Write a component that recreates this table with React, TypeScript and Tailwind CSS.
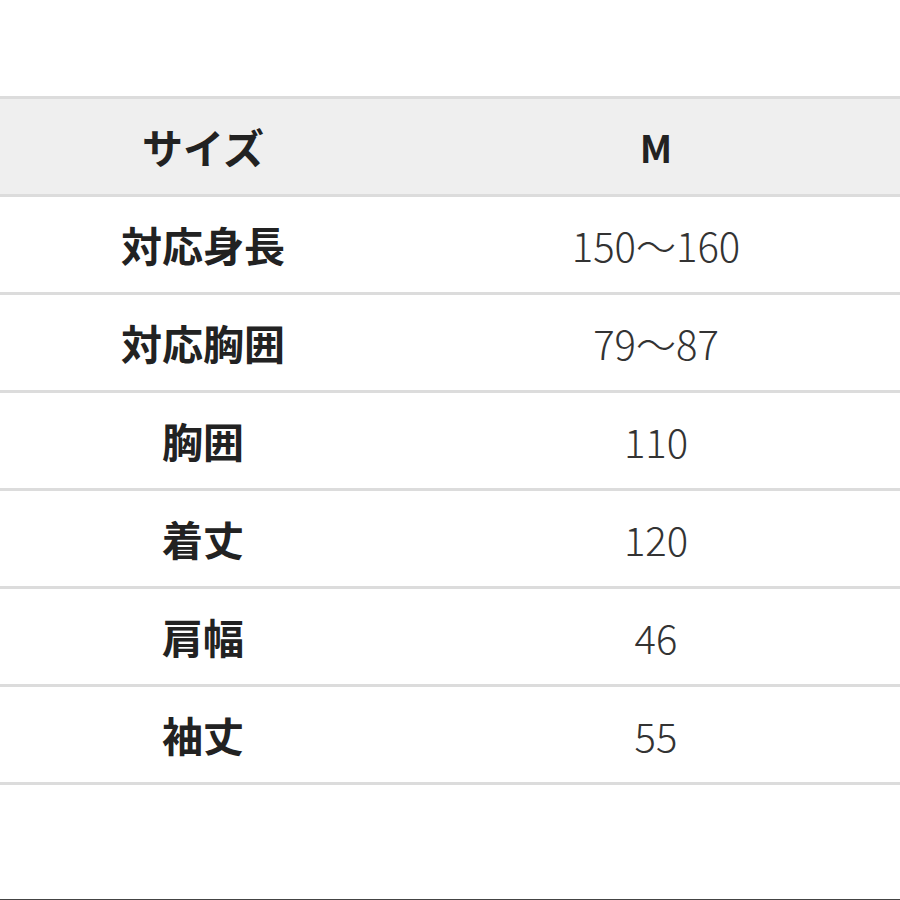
const rows: [string, string][] = [
  ["対応身長", "150〜160"],
  ["対応胸囲", "79〜87"],
  ["胸囲", "110"],
  ["着丈", "120"],
  ["肩幅", "46"],
  ["袖丈", "55"],
];

const font = "font-['Noto_Sans_CJK_JP','Noto_Sans',sans-serif]";

export default function App() {
  return (
    <div className={`h-[900px] w-[900px] overflow-hidden bg-white ${font}`}>
      <div className="h-[96px]" />
      <div className="w-[912px] border-t-[3px] border-[#dcdcdc]">
        <div className="grid h-[98px] grid-cols-[406px_500px] items-center border-b-[3px] border-[#dcdcdc] bg-[#efefef] text-[41px] font-bold text-[#222]">
          <div className="text-center">サイズ</div>
          <div className="text-center text-[38px]">M</div>
        </div>
        {rows.map(([label, value]) => (
          <div
            key={label}
            className="grid h-[98px] grid-cols-[406px_500px] items-center border-b-[3px] border-[#dcdcdc]"
          >
            <div className="text-center text-[41px] font-bold text-[#222]">{label}</div>
            <div className="text-center text-[40px] font-light text-[#333]">{value}</div>
          </div>
        ))}
      </div>
      <div className="mt-[114px] h-[2px] bg-[#444]" />
    </div>
  );
}
